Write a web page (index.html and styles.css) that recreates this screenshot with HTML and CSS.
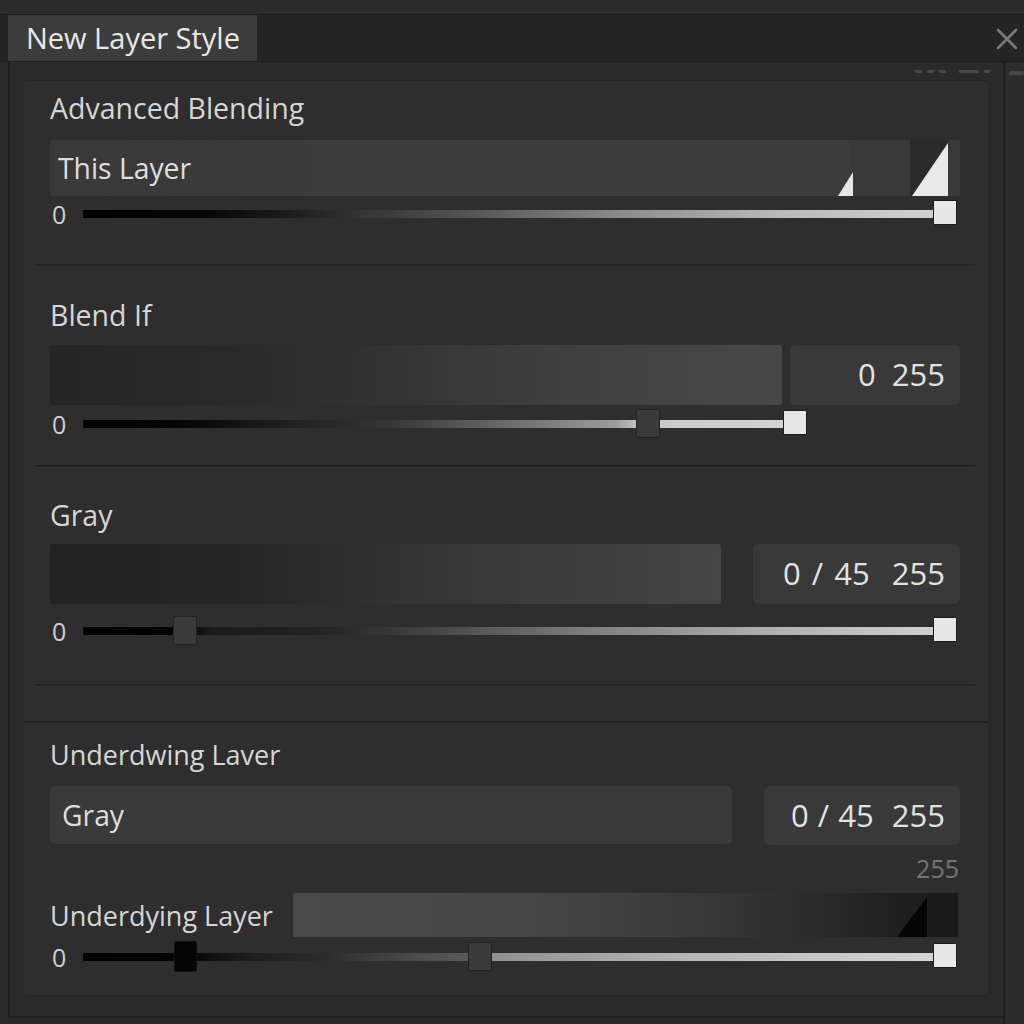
FILE: index.html
```html
<!DOCTYPE html>
<html>
<head>
<meta charset="utf-8">
<link rel="stylesheet" href="styles.css">
</head>
<body>
<div class="topstrip"></div>
<div class="tabrow">
  <div class="tab">New Layer Style</div>
  <div class="tabfill">
    <svg class="close" width="22" height="22" viewBox="0 0 22 22"><path d="M2 2 L20 20 M20 2 L2 20" stroke="#7a7a7a" stroke-width="2.6" stroke-linecap="round"/></svg>
  </div>
</div>
<div class="main">
  <div class="frame">
    <div class="framehead"><span class="dash d1"></span><span class="dash d1"></span><span class="dash d1"></span><span class="dash d2"></span><span class="dash d3"></span></div>
    <div class="panel">
      <div class="upper">
        <section class="sec s1">
          <div class="label">Advanced Blending</div>
          <div class="bar bar-this">
            <span class="bartext">This Layer</span>
            <div class="seg"></div>
            <svg class="tris" width="124" height="56" viewBox="0 0 124 56">
              <polygon points="2,56 17,32 17,56" fill="#e6e6e6"/>
              <polygon points="76,56 112,3 112,56" fill="#e9e9e9"/>
            </svg>
          </div>
          <div class="srow">
            <span class="zero">0</span>
            <div class="track tr1">
              <span class="thumb white" style="left:850px"></span>
            </div>
          </div>
        </section>
        <div class="divider d-a"></div>
        <section class="sec s2">
          <div class="label">Blend If</div>
          <div class="barrow">
            <div class="bar bar-blend"></div>
            <div class="valbox vb-blend">0&nbsp; 255</div>
          </div>
          <div class="srow">
            <span class="zero">0</span>
            <div class="track tr2">
              <span class="thumb dark" style="left:553px"></span>
              <span class="thumb white" style="left:700px"></span>
            </div>
          </div>
        </section>
        <div class="divider d-b"></div>
        <section class="sec s3">
          <div class="label">Gray</div>
          <div class="barrow">
            <div class="bar bar-gray"></div>
            <div class="valbox vb-gray">0 / 45&nbsp; 255</div>
          </div>
          <div class="srow">
            <span class="zero">0</span>
            <div class="track tr3">
              <span class="thumb dark" style="left:90px"></span>
              <span class="thumb white" style="left:850px"></span>
            </div>
          </div>
        </section>
        <div class="divider d-c"></div>
      </div>
      <div class="lower">
        <div class="label small">Underdwing Laver</div>
        <div class="barrow r4">
          <div class="bar bar-under"><span class="bartext">Gray</span></div>
          <div class="valbox vb-under">0 / 45&nbsp; 255</div>
        </div>
        <div class="hint">255</div>
        <div class="udrow">
          <div class="label small ud">Underdying Layer</div>
          <div class="bar bar-ud">
            <div class="udseg"></div>
            <svg class="udtri" width="31" height="40" viewBox="0 0 31 40"><polygon points="0,40 30,0 30,40" fill="#050505"/></svg>
          </div>
        </div>
        <div class="srow r4s">
          <span class="zero">0</span>
          <div class="track tr4">
            <span class="thumb black" style="left:91px"></span>
            <span class="thumb dark" style="left:385px"></span>
            <span class="thumb white" style="left:850px"></span>
          </div>
        </div>
      </div>
    </div>
  </div>
  <div class="side"><span class="sidedash"></span></div>
</div>
</body>
</html>
```
FILE: styles.css
```css
html, body {
  margin: 0;
  padding: 0;
}
body {
  width: 1024px;
  height: 1024px;
  overflow: hidden;
  background: #2a2a2a;
  font-family: "Open Sans", "Noto Sans", sans-serif;
  color: #d8d8d8;
}
.topstrip {
  height: 14px;
  background: #2b2b2b;
  border-bottom: 1px solid #1b1b1b;
}
.tabrow {
  height: 47px;
  display: flex;
  background: #232323;
  border-bottom: 1px solid #1c1c1c;
  box-sizing: border-box;
}
.tab {
  margin-left: 8px;
  width: 249px;
  box-sizing: border-box;
  background: #3c3c3c;
  color: #e8e8e8;
  font-size: 29px;
  line-height: 46px;
  padding-left: 18px;
  white-space: nowrap;
}
.tabfill {
  flex: 1;
  display: flex;
  justify-content: flex-end;
  align-items: center;
  padding-right: 6px;
  background: #242424;
}
.close {
  display: block;
  margin-top: 2px;
}
.main {
  display: flex;
  height: 962px;
}
.frame {
  margin-left: 8px;
  width: 995px;
  box-sizing: border-box;
  border-left: 2px solid #1f1f1f;
  border-bottom: 2px solid #1f1f1f;
  padding: 0 13px 20px 12px;
  height: 956px;
  background: #2a2a2a;
}
.framehead {
  height: 18px;
  display: flex;
  justify-content: flex-end;
  align-items: center;
  gap: 5px;
  padding-right: 0;
}
.dash {
  display: block;
  height: 3px;
  background: #4a4a4a;
  border-radius: 1px;
}
.d1 { width: 7px; }
.d2 { width: 20px; margin-left: 8px; }
.d3 { width: 6px; }
.side {
  flex: 1;
  border-left: 2px solid #202020;
  background: #2c2c2c;
  position: relative;
  box-shadow: inset 1px 0 0 #262626;
}
.sidedash {
  display: block;
  margin: 9px 0 0 4px;
  width: 15px;
  height: 4px;
  background: #484848;
  border-radius: 2px;
}
.panel {
  background: #2e2e2e;
  border: 1px solid #262626;
  border-radius: 6px;
}
.sec {
  padding: 0 29px 0 27px;
}
.label {
  font-size: 28.5px;
  line-height: 32px;
  color: #d6d6d6;
  white-space: nowrap;
}
.label.small {
  font-size: 27px;
}
.s1 { padding-top: 11px; }
.s2 .label { margin-top: 33px; }
.s3 .label { margin-top: 32px; }
.bar {
  position: relative;
  box-sizing: border-box;
  border-radius: 3px;
}
.bartext {
  font-size: 28.3px;
  color: #dedede;
  line-height: 56px;
  padding-left: 8px;
  position: relative;
}
.bar-this {
  margin-top: 16px;
  height: 56px;
  background: linear-gradient(90deg, #393939 0%, #3d3d3d 60%, #3c3c3c 100%);
  display: flex;
  align-items: center;
}
.seg {
  position: absolute;
  left: 800px;
  right: 0;
  top: 0;
  bottom: 0;
  background: linear-gradient(90deg, #393939 0px, #393939 60px, #2a2a2a 60px, #2a2a2a 98px, #393939 98px);
  border-radius: 0 3px 3px 0;
}
.tris {
  position: absolute;
  left: 786px;
  top: 0;
}
.srow {
  display: flex;
  align-items: center;
  height: 28px;
}
.s1 .srow { margin-top: 4px; }
.s2 .srow { margin-top: 5px; }
.s3 .srow { margin-top: 13px; }
.zero {
  width: 33px;
  box-sizing: border-box;
  padding-left: 2px;
  font-size: 25px;
  line-height: 28px;
  color: #cfcfcf;
}
.track {
  position: relative;
  height: 8px;
  border-radius: 1px;
}
.tr1 {
  width: 862px;
  background: linear-gradient(90deg, #000 0%, #050505 14%, #1d1d1d 24%, #333 32%, #555 45%, #8a8a8a 62%, #b8b8b8 80%, #d2d2d2 100%);
}
.tr2 {
  width: 712px;
  background: linear-gradient(90deg, #000 0%, #070707 15%, #222 30%, #333 42%, #666 58%, #9e9e9e 75%, #c7c7c7 78%, #d4d4d4 100%);
}
.tr3 {
  width: 862px;
  background: linear-gradient(90deg, #000 0%, #020202 11%, #1a1a1a 15%, #242424 28%, #444 40%, #7c7c7c 58%, #acacac 78%, #d2d2d2 100%);
}
.tr4 {
  width: 862px;
  background: linear-gradient(90deg, #000 0%, #050505 12%, #1f1f1f 20%, #2c2c2c 28%, #4a4a4a 38%, #5a5a5a 45%, #8f8f8f 47%, #b5b5b5 70%, #d6d6d6 100%);
}
.thumb {
  position: absolute;
  box-sizing: border-box;
  width: 24px;
}
.thumb.white {
  top: -10px;
  height: 25px;
  background: #e7e7e7;
  border: 1px solid #1c1c1c;
  border-radius: 1px;
}
.thumb.dark {
  top: -11px;
  height: 29px;
  background: #3a3a3a;
  border: 1px solid #222;
  border-radius: 2px;
}
.thumb.black {
  top: -12px;
  width: 23px;
  height: 31px;
  background: #050505;
  border: 1px solid #111;
  border-radius: 2px;
}
.barrow {
  display: flex;
  margin-top: 14px;
}
.s3 .barrow { margin-top: 13px; }
.bar-blend {
  width: 732px;
  height: 60px;
  background: linear-gradient(90deg, #252525 0%, #2a2a2a 25%, #353535 50%, #404040 70%, #484848 100%);
}
.valbox {
  box-sizing: border-box;
  height: 60px;
  background: #393939;
  border-radius: 6px;
  font-size: 31px;
  line-height: 58px;
  color: #e2e2e2;
  text-align: right;
  white-space: nowrap;
}
.vb-blend {
  margin-left: 8px;
  width: 170px;
  padding-right: 15px;
}
.bar-gray {
  width: 671px;
  height: 60px;
  background: linear-gradient(90deg, #222 0%, #262626 30%, #333 52%, #3d3d3d 75%, #454545 100%);
}
.vb-gray {
  margin-left: 32px;
  width: 207px;
  padding-right: 15px;
  word-spacing: 3px;
}
.divider {
  height: 2px;
  margin: 0 14px 0 12px;
  background: #242424;
  box-shadow: 0 1px 0 #333;
}
.d-a { margin-top: 36px; }
.d-b { margin-top: 27px; }
.d-c { margin-top: 39px; }
.upper {
  padding-bottom: 35px;
  border-bottom: 2px solid #222;
}
.lower {
  padding: 16px 29px 24px 27px;
}
.r4 {
  margin-top: 15px;
}
.bar-under {
  width: 682px;
  height: 58px;
  background: #3a3a3a;
  border-radius: 5px;
  display: flex;
  align-items: center;
}
.bar-under .bartext {
  padding-left: 12px;
  line-height: 58px;
}
.vb-under {
  margin-left: 32px;
  width: 196px;
  height: 59px;
  padding-right: 15px;
  word-spacing: 1px;
}
.hint {
  margin-top: 9px;
  height: 28px;
  text-align: right;
  font-size: 25px;
  line-height: 28px;
  color: #767676;
  padding-right: 1px;
}
.udrow {
  margin-top: 11px;
  display: flex;
  align-items: center;
}
.ud {
  width: 243px;
  margin-top: 2px;
}
.bar-ud {
  width: 665px;
  height: 44px;
  border-radius: 2px;
  background: linear-gradient(90deg, #4a4a4a 0%, #474747 30%, #404040 50%, #2e2e2e 75%, #1e1e1e 92%);
}
.udseg {
  position: absolute;
  right: 0;
  top: 0;
  bottom: 0;
  width: 30px;
  background: #1a1a1a;
  border-radius: 0 2px 2px 0;
}
.udtri {
  position: absolute;
  right: 30px;
  top: 4px;
}
.r4s {
  margin-top: 6px;
}
```
